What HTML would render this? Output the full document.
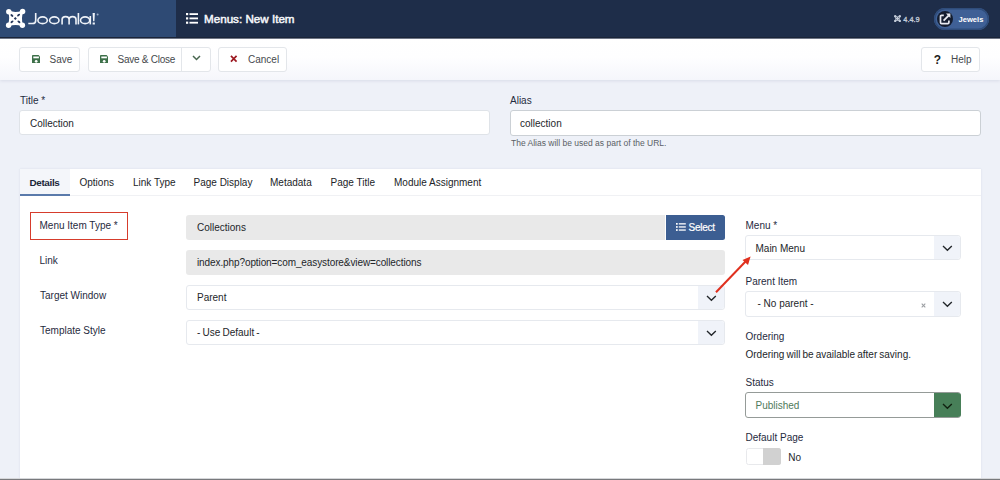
<!DOCTYPE html>
<html><head><meta charset="utf-8">
<style>
*{box-sizing:border-box;margin:0;padding:0}
html,body{width:1000px;height:480px;overflow:hidden}
body{position:relative;background:#eef1f8;font-family:"Liberation Sans",sans-serif;font-size:10px;color:#22262a}
.a{position:absolute}
#hdr{left:0;top:0;width:1000px;height:38px;background:#1e2d49}
#logo{left:0;top:0;width:176px;height:38px;background:#2e4a74}
#hdrline{left:0;top:37px;width:1000px;height:1px;background:#1a2438}
#hdrline2{left:0;top:38px;width:1000px;height:1px;background:#6f7686}
#ttl{left:204px;top:12.1px;font-size:11.65px;color:#f4f6fa;-webkit-text-stroke:0.5px #f4f6fa;white-space:nowrap}
#ver{left:903.3px;top:14.6px;font-size:7.4px;color:#c3cbd8;-webkit-text-stroke:0.3px #c3cbd8}
#pill{left:934px;top:8px;width:55px;height:22px;border-radius:11px;background:#3f6096;box-shadow:inset 0 0 0 1.5px #2f4c7a}
#pillc{left:937px;top:10.6px;width:16px;height:16px;border-radius:8px;background:#141d30}
#jew{left:958.5px;top:14.5px;font-size:7.6px;font-weight:bold;color:#fff}
#tb{left:0;top:39px;width:1000px;height:41px;background:linear-gradient(#fff 0%,#fefeff 45%,#f5f6fb 100%);box-shadow:0 1px 3px rgba(120,130,160,.18)}
.btn{position:absolute;top:47px;height:25px;background:#fff;border:1px solid #e3e6ea;border-radius:3px}
.bt{position:absolute;top:53.5px;font-size:10px;color:#46494d;white-space:nowrap}
.lbl{position:absolute;font-size:10px;color:#1f2b3e;white-space:nowrap}
.inp{position:absolute;background:#fff;border:1px solid #dfe3e8;border-radius:3px}
.itx{position:absolute;font-size:10px;color:#23262a;white-space:nowrap}
#card{left:20px;top:169px;width:961px;height:320px;background:#fff;box-shadow:0 0 2px rgba(150,160,190,.25)}
.tab{position:absolute;top:177px;font-size:10px;color:#212428;white-space:nowrap}
.gray{position:absolute;background:#e9e9e9;border-radius:3px}
.chev{position:absolute;background:#f0f3f9;border-radius:0 3px 3px 0}
</style></head><body>
<div class="a" id="hdr"></div>
<div class="a" id="logo"></div>
<div class="a" id="hdrline"></div><div class="a" id="hdrline2"></div>
<!-- joomla logo -->
<svg class="a" style="left:4px;top:7px" width="24" height="23" viewBox="4 7 24 23">
 <g fill="#fff">
  <circle cx="8.8" cy="11.7" r="2.7"/><circle cx="22.6" cy="11.5" r="2.7"/><circle cx="8.6" cy="25.3" r="2.7"/><circle cx="22.4" cy="25.3" r="2.7"/>
 </g>
 <path d="M9.2 11.8 Q15.6 14.2 22.2 11.6 Q19.8 18.5 22 25 Q15.5 22.8 9 25 Q11.3 18.5 9.2 11.8 Z" fill="#fff" stroke="#fff" stroke-width="2"/>
 <g fill="#24365a">
  <ellipse cx="11.9" cy="15.5" rx="1.7" ry="1" transform="rotate(40 11.9 15.5)"/>
  <ellipse cx="18.6" cy="15.1" rx="1.7" ry="1" transform="rotate(-40 18.6 15.1)"/>
  <ellipse cx="12" cy="21.8" rx="1.7" ry="1" transform="rotate(-40 12 21.8)"/>
  <ellipse cx="18.9" cy="21.8" rx="1.7" ry="1" transform="rotate(40 18.9 21.8)"/>
  <path d="M15.3 17 L16.8 18.5 L15.3 20 L13.8 18.5 Z"/>
 </g>
</svg>
<svg class="a" style="left:26px;top:10px" width="74" height="17" viewBox="26 10 74 17">
 <g stroke="#eef2f8" stroke-width="1.6" fill="none">
  <path d="M35.7 13 V20.4 Q35.7 23.5 32.4 23.5 H28.3"/>
  <ellipse cx="42.6" cy="20.25" rx="4.7" ry="3.4"/>
  <ellipse cx="54.3" cy="20.25" rx="4.7" ry="3.4"/>
  <path d="M62.1 24.4 V19.4 Q62.1 16.6 65.6 16.6 Q69.1 16.6 69.1 19.4 V24.4 M69.1 19.4 Q69.1 16.6 72.55 16.6 Q76 16.6 76 19.4 V24.4"/>
  <path d="M78.4 13 V24.4"/>
  <ellipse cx="85.1" cy="20.25" rx="4.6" ry="3.4"/><path d="M90.3 16 V24.4"/>
 </g>
 <path d="M92.6 13 H94.9 L94.4 21.2 H93.1 Z M92.65 22.6 H94.85 V24.4 H92.65 Z" fill="#eef2f8"/>
 <circle cx="97.6" cy="14.6" r="1" fill="#9fb0c8"/>
</svg>
<!-- list icon -->
<svg class="a" style="left:186px;top:13px" width="12" height="11" viewBox="0 0 12 11">
 <g fill="#fff"><rect x="0" y="0" width="2.2" height="2.2"/><rect x="0" y="4.3" width="2.2" height="2.2"/><rect x="0" y="8.6" width="2.2" height="2.2"/>
 <rect x="3.5" y="0.2" width="8.5" height="1.8"/><rect x="3.5" y="4.5" width="8.5" height="1.8"/><rect x="3.5" y="8.8" width="8.5" height="1.8"/></g>
</svg>
<div class="a" id="ttl">Menus: New Item</div>
<svg class="a" style="left:894.4px;top:15px" width="7" height="7.2" viewBox="0 0 7 7.2">
 <g fill="#c3cbd8"><circle cx="1.2" cy="1.2" r="1.2"/><circle cx="5.8" cy="1.2" r="1.2"/><circle cx="1.2" cy="6" r="1.2"/><circle cx="5.8" cy="6" r="1.2"/>
 <path d="M1 1 Q3.5 1.8 6 1 Q5.3 3.6 6 6.2 Q3.5 5.5 1 6.2 Q1.7 3.6 1 1 Z"/></g>
 <g fill="#3a4660"><circle cx="2.4" cy="2.5" r="0.5"/><circle cx="4.6" cy="2.5" r="0.5"/><circle cx="2.4" cy="4.7" r="0.5"/><circle cx="4.6" cy="4.7" r="0.5"/></g>
</svg>
<div class="a" id="ver">4.4.9</div>
<div class="a" id="pill"></div>
<div class="a" id="pillc"></div>
<svg class="a" style="left:939px;top:13px" width="12" height="12" viewBox="0 0 12 12">
 <path d="M4.8 2.3 H2.6 Q1.5 2.3 1.5 3.4 V9.6 Q1.5 10.7 2.6 10.7 H8.8 Q9.9 10.7 9.9 9.6 V7.4" stroke="#e8ebf2" stroke-width="1.7" fill="none"/>
 <path d="M4.6 7.6 L9.6 2.6" stroke="#e8ebf2" stroke-width="1.9"/>
 <path d="M7 0.6 H11.4 V5 Z" fill="#e8ebf2"/>
</svg>
<div class="a" id="jew">Jewels</div>

<!-- toolbar -->
<div class="a" id="tb"></div>
<div class="btn" style="left:19px;width:61px"></div>
<svg class="a" style="left:31.6px;top:54.6px" width="8.5" height="8.4" viewBox="0 0 8.5 8.4">
 <path d="M0 0.8 Q0 0 0.8 0 H6.6 L8.5 1.9 V7.6 Q8.5 8.4 7.7 8.4 H0.8 Q0 8.4 0 7.6 Z" fill="#3d7049"/>
 <rect x="1.3" y="1.5" width="5.6" height="1.8" fill="#fff"/>
 <circle cx="4.2" cy="6.3" r="1.35" fill="#fff"/>
</svg>
<div class="bt" style="left:49.5px">Save</div>
<div class="btn" style="left:88px;width:123px"></div>
<div class="a" style="left:181px;top:48px;width:1px;height:23px;background:#e3e6ea"></div>
<svg class="a" style="left:99.6px;top:54.6px" width="8.5" height="8.4" viewBox="0 0 8.5 8.4">
 <path d="M0 0.8 Q0 0 0.8 0 H6.6 L8.5 1.9 V7.6 Q8.5 8.4 7.7 8.4 H0.8 Q0 8.4 0 7.6 Z" fill="#3d7049"/>
 <rect x="1.3" y="1.5" width="5.6" height="1.8" fill="#fff"/>
 <circle cx="4.2" cy="6.3" r="1.35" fill="#fff"/>
</svg>
<div class="bt" style="left:117.5px;letter-spacing:-0.25px">Save &amp; Close</div>
<svg class="a" style="left:191.5px;top:55.3px" width="9" height="6" viewBox="0 0 9 6">
 <path d="M1 1 L4.5 4.5 L8 1" stroke="#48664f" stroke-width="1.5" fill="none"/>
</svg>
<div class="btn" style="left:218px;width:69px"></div>
<svg class="a" style="left:230px;top:55px" width="7.5" height="7.5" viewBox="0 0 8 8">
 <path d="M1 1 L7 7 M7 1 L1 7" stroke="#9c1820" stroke-width="1.8"/>
</svg>
<div class="bt" style="left:248px">Cancel</div>
<div class="btn" style="left:921px;width:59px"></div>
<div class="a" style="left:933.8px;top:52.6px;font-size:12px;font-weight:bold;color:#1b1d20">?</div>
<div class="bt" style="left:951px">Help</div>

<!-- title / alias -->
<div class="lbl" style="left:20px;top:95px">Title *</div>
<div class="inp" style="left:19px;top:110px;width:471px;height:25px"></div>
<div class="itx" style="left:30px;top:117.7px">Collection</div>
<div class="lbl" style="left:510px;top:95px">Alias</div>
<div class="inp" style="left:510px;top:109.5px;width:471px;height:26px;border:1.3px solid #cbd0d5"></div>
<div class="itx" style="left:520px;top:117.7px">collection</div>
<div class="a" style="left:511px;top:138px;font-size:8.5px;color:#5a5f66;white-space:nowrap">The Alias will be used as part of the URL.</div>

<!-- card -->
<div class="a" id="card"></div>
<div class="a" style="left:20px;top:169px;width:50px;height:26px;background:#f4f6fa"></div>
<div class="a" style="left:20px;top:194px;width:50px;height:2px;background:#5a7aab"></div>
<div class="a" style="left:70px;top:195px;width:911px;height:1px;background:#f0f1f4"></div>
<div class="tab" style="left:29.5px;top:176.8px;font-size:9.9px;letter-spacing:-0.35px;font-weight:bold;color:#1a2538">Details</div>
<div class="tab" style="left:79.5px">Options</div>
<div class="tab" style="left:133px">Link Type</div>
<div class="tab" style="left:193.5px">Page Display</div>
<div class="tab" style="left:270px">Metadata</div>
<div class="tab" style="left:330.5px">Page Title</div>
<div class="tab" style="left:394px">Module Assignment</div>

<!-- left fields -->
<div class="a" style="left:30px;top:212px;width:97.5px;height:27.5px;border:1.8px solid #d63c2c"></div>
<div class="lbl" style="left:39.5px;top:219.5px">Menu Item Type *</div>
<div class="lbl" style="left:39.5px;top:255px">Link</div>
<div class="lbl" style="left:40px;top:289.5px">Target Window</div>
<div class="lbl" style="left:40px;top:325px">Template Style</div>

<div class="gray" style="left:186px;top:214.5px;width:479px;height:25px;border-radius:3px 0 0 3px"></div>
<div class="a" style="left:666px;top:214.5px;width:59px;height:25px;background:#3c5e92;border-radius:0 2.5px 2.5px 0"></div>
<svg class="a" style="left:676px;top:222.5px" width="10" height="8" viewBox="0 0 10 8">
 <g fill="#fff"><rect x="0" y="0" width="1.7" height="1.7"/><rect x="0" y="3.1" width="1.7" height="1.7"/><rect x="0" y="6.2" width="1.7" height="1.7"/>
 <rect x="2.8" y="0.2" width="7" height="1.3"/><rect x="2.8" y="3.3" width="7" height="1.3"/><rect x="2.8" y="6.4" width="7" height="1.3"/></g>
</svg>
<div class="a" style="left:688.6px;top:221.5px;font-size:10px;color:#fff;letter-spacing:-0.25px;-webkit-text-stroke:0.2px #fff">Select</div>
<div class="itx" style="left:197px;top:221.5px">Collections</div>

<div class="gray" style="left:186px;top:249.5px;width:539px;height:25px"></div>
<div class="itx" style="left:197px;top:256.5px;letter-spacing:-0.1px">index.php?option=com_easystore&amp;view=collections</div>

<div class="inp" style="left:186px;top:284.5px;width:539px;height:25px;border-color:#e6e9ee"></div>
<div class="chev" style="left:698px;top:285.5px;width:26px;height:23px"></div>
<div class="itx" style="left:197px;top:291.5px">Parent</div>
<svg class="a" style="left:706.0px;top:295.1px" width="11" height="7" viewBox="0 0 11 7"><path d="M1 1 L5.4 5.2 L9.8 1" stroke="#22262a" stroke-width="1.35" fill="none"/></svg>

<div class="inp" style="left:186px;top:319.5px;width:539px;height:25px;border-color:#e6e9ee"></div>
<div class="chev" style="left:698px;top:320.5px;width:26px;height:23px"></div>
<div class="itx" style="left:197px;top:326.5px;word-spacing:-0.6px">- Use Default -</div>
<svg class="a" style="left:706.0px;top:330.1px" width="11" height="7" viewBox="0 0 11 7"><path d="M1 1 L5.4 5.2 L9.8 1" stroke="#22262a" stroke-width="1.35" fill="none"/></svg>

<!-- right column -->
<div class="lbl" style="left:745.5px;top:220px">Menu *</div>
<div class="inp" style="left:745px;top:234.5px;width:216px;height:25px;border-color:#e6e9ee"></div>
<div class="chev" style="left:934px;top:235.5px;width:26px;height:23px"></div>
<div class="itx" style="left:755.5px;top:243px">Main Menu</div>
<svg class="a" style="left:941.5px;top:245.1px" width="11" height="7" viewBox="0 0 11 7"><path d="M1 1 L5.4 5.2 L9.8 1" stroke="#22262a" stroke-width="1.35" fill="none"/></svg>

<div class="lbl" style="left:745.5px;top:276px">Parent Item</div>
<div class="inp" style="left:745px;top:290.5px;width:216px;height:26px;border-color:#e6e9ee"></div>
<div class="chev" style="left:934px;top:291.5px;width:26px;height:24px"></div>
<div class="itx" style="left:757.5px;top:298px">- No parent -</div>
<svg class="a" style="left:921px;top:302.5px" width="5" height="5" viewBox="0 0 5 5"><path d="M0.7 0.7 L4.3 4.3 M4.3 0.7 L0.7 4.3" stroke="#9b9ea2" stroke-width="1.05"/></svg>
<svg class="a" style="left:941.5px;top:300.6px" width="11" height="7" viewBox="0 0 11 7"><path d="M1 1 L5.4 5.2 L9.8 1" stroke="#22262a" stroke-width="1.35" fill="none"/></svg>

<div class="lbl" style="left:745.5px;top:331px">Ordering</div>
<div class="itx" style="left:745.5px;top:349px;word-spacing:-0.7px">Ordering will be available after saving.</div>

<div class="lbl" style="left:745.5px;top:376.5px">Status</div>
<div class="inp" style="left:745px;top:392px;width:216px;height:25.5px;border:1px solid #959b98"></div>
<div class="a" style="left:933.5px;top:392.5px;width:27.5px;height:24.5px;background:#477f58;border-radius:0 3px 3px 0"></div>
<div class="itx" style="left:755.5px;top:399.9px;color:#4f7a5a">Published</div>
<svg class="a" style="left:941.5px;top:402.6px" width="11" height="7" viewBox="0 0 11 7"><path d="M1 1 L5.4 5.2 L9.8 1" stroke="#10200f" stroke-width="1.35" fill="none"/></svg>

<div class="lbl" style="left:745.5px;top:432px">Default Page</div>
<div class="a" style="left:745.5px;top:448px;width:35px;height:17px;border:1px solid #e8e9ec;border-radius:2.5px;background:#fff"></div>
<div class="a" style="left:763px;top:448px;width:17.5px;height:17px;background:#d1d1d1;border-radius:0 2.5px 2.5px 0"></div>
<div class="itx" style="left:788.3px;top:451.5px">No</div>

<!-- red arrow -->
<svg class="a" style="left:700px;top:245px" width="70" height="60" viewBox="700 245 70 60">
 <path d="M716 292.2 L746 261" stroke="#e0301e" stroke-width="2" fill="none"/>
 <path d="M750.6 256.5 L742.5 260 L748 265 Z" fill="#e0301e"/>
</svg>

<div class="a" style="left:0;top:478px;width:1000px;height:1px;background:#d6d7da"></div><div class="a" style="left:0;top:479px;width:1000px;height:1px;background:#78797c"></div>
</body></html>
